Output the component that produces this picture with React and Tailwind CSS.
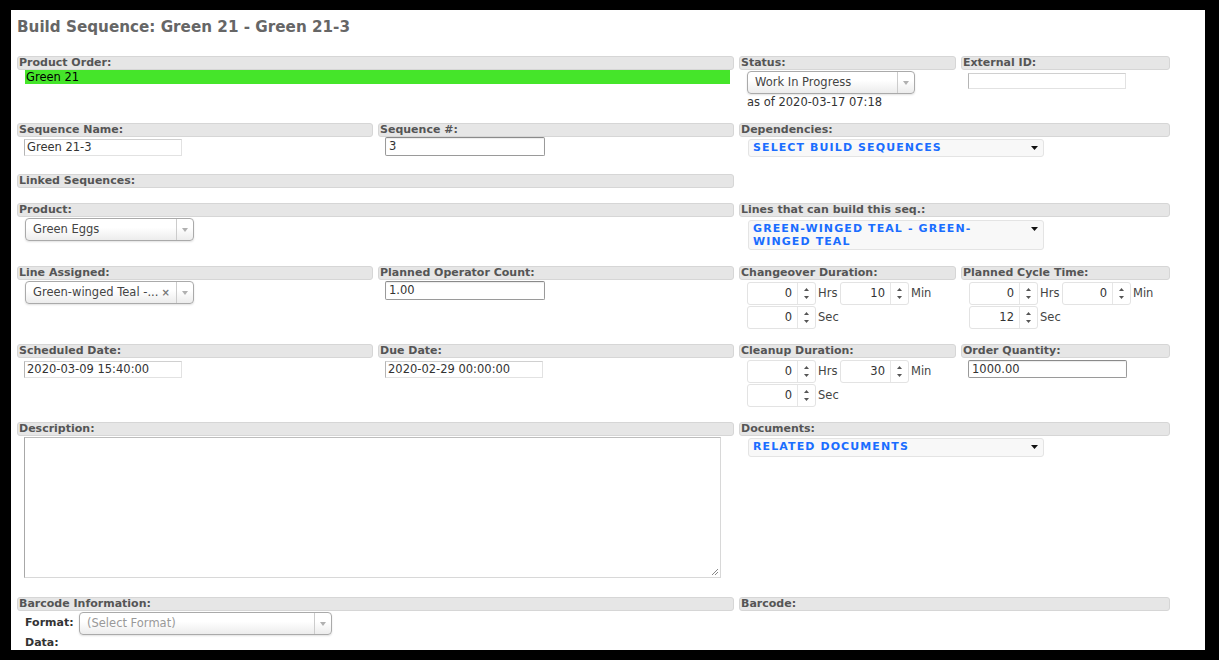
import React from "react";

const COLS = "grid grid-cols-[356px_356px_217px_209px] gap-x-[5px]";

function LabelBar({ children }) {
  return (
    <div className="h-[14px] rounded-[3px] border border-[#d6d6d6] bg-[#e6e6e6] pl-[1px] text-[11px] font-bold leading-[12px] text-[#555] whitespace-nowrap overflow-hidden">
      {children}
    </div>
  );
}

function LightInput({ value, className = "" }) {
  return (
    <div
      className={
        "border border-[#e2e2e2] border-l-[#b5b5b5] border-t-[#d0d0d0] pl-[2px] text-[11.5px] text-[#333] leading-[15px] " +
        className
      }
    >
      {value}
    </div>
  );
}

function DarkInput({ value, className = "" }) {
  return (
    <div
      className={
        "rounded-[2px] border border-[#9a9a9a] border-t-[#8a8a8a] pl-[3px] text-[11.5px] text-[#333] leading-[17px] shadow-[inset_0_1px_1px_rgba(0,0,0,0.08)] " +
        className
      }
    >
      {value}
    </div>
  );
}

function SmallTri({ className = "" }) {
  return (
    <svg width="6" height="4" viewBox="0 0 6 4" className={className}>
      <path d="M0 0 L6 0 L3 4 Z" fill="#b0b0b0" />
    </svg>
  );
}

function ChosenSelect({ text, width, withX, placeholder, className = "" }) {
  return (
    <div
      className={
        "flex h-[23px] items-center rounded-[4px] border border-[#aaa] bg-gradient-to-b from-white from-[40%] to-[#ececec] shadow-[0_1px_2px_rgba(0,0,0,0.12)] " +
        className
      }
      style={{ width }}
    >
      <div
        className={
          "flex-1 truncate pl-[7px] text-[11.5px] leading-[21px] " +
          (placeholder ? "text-[#999]" : "text-[#444]")
        }
      >
        {text}
      </div>
      {withX && (
        <span className="mr-[6px] text-[10px] font-bold leading-[21px] text-[#777]">×</span>
      )}
      <div className="flex h-full w-[17px] items-center justify-center border-l border-[#ccc]">
        <SmallTri />
      </div>
    </div>
  );
}

function BlueDrop({ lines, className = "" }) {
  return (
    <div
      className={
        "flex w-[296px] justify-between rounded-[3px] border border-[#e4e4e4] bg-[#f8f8f8] pl-[4px] pr-[5px] text-[11px] font-bold uppercase tracking-[1.1px] text-[#1a6dff] " +
        className
      }
    >
      <div className="leading-[12.5px] pt-[2px]">
        {lines.map((l, i) => (
          <div key={i}>{l}</div>
        ))}
      </div>
      <svg width="7" height="4" viewBox="0 0 7 4" className="mt-[6px] shrink-0">
        <path d="M0 0 L7 0 L3.5 4 Z" fill="#111" />
      </svg>
    </div>
  );
}

function Spin({ value, unit }) {
  return (
    <div className="flex items-center">
      <div className="flex h-[23px] w-[69px] rounded-[3px] border border-[#e3e3e3] bg-white">
        <div className="flex-1 pr-[5px] text-right text-[11.5px] leading-[21px] text-[#333]">{value}</div>
        <div className="flex w-[18px] flex-col items-center justify-center gap-[5px] border-l border-[#e6e6e6]">
          <svg width="5" height="3" viewBox="0 0 5 3">
            <path d="M0 3 L5 3 L2.5 0 Z" fill="#555" />
          </svg>
          <svg width="5" height="3" viewBox="0 0 5 3">
            <path d="M0 0 L5 0 L2.5 3 Z" fill="#555" />
          </svg>
        </div>
      </div>
      <span className="ml-[2px] w-[22px] text-[11.5px] text-[#444]">{unit}</span>
    </div>
  );
}

function Duration({ h, m, s }) {
  return (
    <div className="ml-[8px] mt-[2px] flex flex-col gap-[1px]">
      <div className="flex items-center">
        <Spin value={h} unit="Hrs" />
        <Spin value={m} unit="Min" />
      </div>
      <Spin value={s} unit="Sec" />
    </div>
  );
}

export default function App() {
  return (
    <div className="h-[660px] w-[1219px] overflow-hidden bg-black pl-[11px] pt-[10px] font-['DejaVu_Sans','Verdana',sans-serif]">
      <div className="h-[640px] w-[1194px] overflow-hidden bg-white px-[6px]">
        <div className="h-[46px] pt-[7px] text-[15.2px] font-bold leading-[20px] text-[#666]">
          Build Sequence: Green 21 - Green 21-3
        </div>

        {/* Row 1 */}
        <div className={COLS + " h-[67px]"}>
          <div className="col-span-2">
            <LabelBar>Product Order:</LabelBar>
            <div className="ml-[8px] mr-[4px] h-[14px] bg-[#45e52a] pl-[1px] text-[11.5px] leading-[14px] text-black">
              Green 21
            </div>
          </div>
          <div>
            <LabelBar>Status:</LabelBar>
            <ChosenSelect text="Work In Progress" width={168} className="ml-[8px] mt-[1px]" />
            <div className="ml-[8px] mt-[1px] text-[11.5px] leading-[14px] text-[#333]">as of 2020-03-17 07:18</div>
          </div>
          <div>
            <LabelBar>External ID:</LabelBar>
            <LightInput value="" className="ml-[7px] mt-[3px] h-[16px] w-[158px]" />
          </div>
        </div>

        {/* Row 2 */}
        <div className={COLS + " h-[51px]"}>
          <div>
            <LabelBar>Sequence Name:</LabelBar>
            <LightInput value="Green 21-3" className="ml-[7px] mt-[2px] h-[17px] w-[158px]" />
          </div>
          <div>
            <LabelBar>Sequence #:</LabelBar>
            <DarkInput value="3" className="ml-[7px] h-[19px] w-[160px]" />
          </div>
          <div className="col-span-2">
            <LabelBar>Dependencies:</LabelBar>
            <BlueDrop lines={["Select Build Sequences"]} className="ml-[9px] mt-[2px] h-[18px]" />
          </div>
        </div>

        {/* Row 3 */}
        <div className={COLS + " h-[29px]"}>
          <div className="col-span-2">
            <LabelBar>Linked Sequences:</LabelBar>
          </div>
        </div>

        {/* Row 4 */}
        <div className={COLS + " h-[63px]"}>
          <div className="col-span-2">
            <LabelBar>Product:</LabelBar>
            <ChosenSelect text="Green Eggs" width={169} className="ml-[8px] mt-[1px]" />
          </div>
          <div className="col-span-2">
            <LabelBar>Lines that can build this seq.:</LabelBar>
            <BlueDrop
              lines={["Green-winged Teal - Green-", "winged Teal"]}
              className="ml-[9px] mt-[3px] h-[30px]"
            />
          </div>
        </div>

        {/* Row 5 */}
        <div className={COLS + " h-[78px]"}>
          <div>
            <LabelBar>Line Assigned:</LabelBar>
            <ChosenSelect text="Green-winged Teal -..." width={169} withX className="ml-[8px] mt-[1px]" />
          </div>
          <div>
            <LabelBar>Planned Operator Count:</LabelBar>
            <DarkInput value="1.00" className="ml-[7px] mt-[1px] h-[19px] w-[160px]" />
          </div>
          <div>
            <LabelBar>Changeover Duration:</LabelBar>
            <Duration h="0" m="10" s="0" />
          </div>
          <div>
            <LabelBar>Planned Cycle Time:</LabelBar>
            <Duration h="0" m="0" s="12" />
          </div>
        </div>

        {/* Row 6 */}
        <div className={COLS + " h-[78px]"}>
          <div>
            <LabelBar>Scheduled Date:</LabelBar>
            <LightInput value="2020-03-09 15:40:00" className="ml-[7px] mt-[3px] h-[17px] w-[158px]" />
          </div>
          <div>
            <LabelBar>Due Date:</LabelBar>
            <LightInput value="2020-02-29 00:00:00" className="ml-[7px] mt-[3px] h-[17px] w-[158px]" />
          </div>
          <div>
            <LabelBar>Cleanup Duration:</LabelBar>
            <Duration h="0" m="30" s="0" />
          </div>
          <div>
            <LabelBar>Order Quantity:</LabelBar>
            <DarkInput value="1000.00" className="ml-[7px] mt-[2px] h-[18px] w-[159px]" />
          </div>
        </div>

        {/* Row 7 */}
        <div className={COLS + " h-[175px]"}>
          <div className="col-span-2">
            <LabelBar>Description:</LabelBar>
            <div className="relative ml-[7px] mt-[1px] h-[141px] w-[697px] border border-[#d8d8d8] border-l-[#a8a8a8] border-t-[#bdbdbd]">
              <svg width="8" height="8" viewBox="0 0 8 8" className="absolute bottom-[1px] right-[1px]">
                <path d="M7 1 L1 7 M7 4 L4 7" stroke="#888" strokeWidth="1" />
              </svg>
            </div>
          </div>
          <div className="col-span-2">
            <LabelBar>Documents:</LabelBar>
            <BlueDrop lines={["Related Documents"]} className="ml-[9px] mt-[2px] h-[19px]" />
          </div>
        </div>

        {/* Row 8 */}
        <div className={COLS}>
          <div className="col-span-2">
            <LabelBar>Barcode Information:</LabelBar>
            <div className="ml-[8px] mt-[1px] flex items-center">
              <span className="w-[54px] text-[11px] font-bold text-[#333]">Format:</span>
              <ChosenSelect text="(Select Format)" placeholder width={253} />
            </div>
            <div className="ml-[8px] mt-[1px] text-[11px] font-bold leading-[14px] text-[#333]">Data:</div>
          </div>
          <div className="col-span-2">
            <LabelBar>Barcode:</LabelBar>
          </div>
        </div>
      </div>
    </div>
  );
}
